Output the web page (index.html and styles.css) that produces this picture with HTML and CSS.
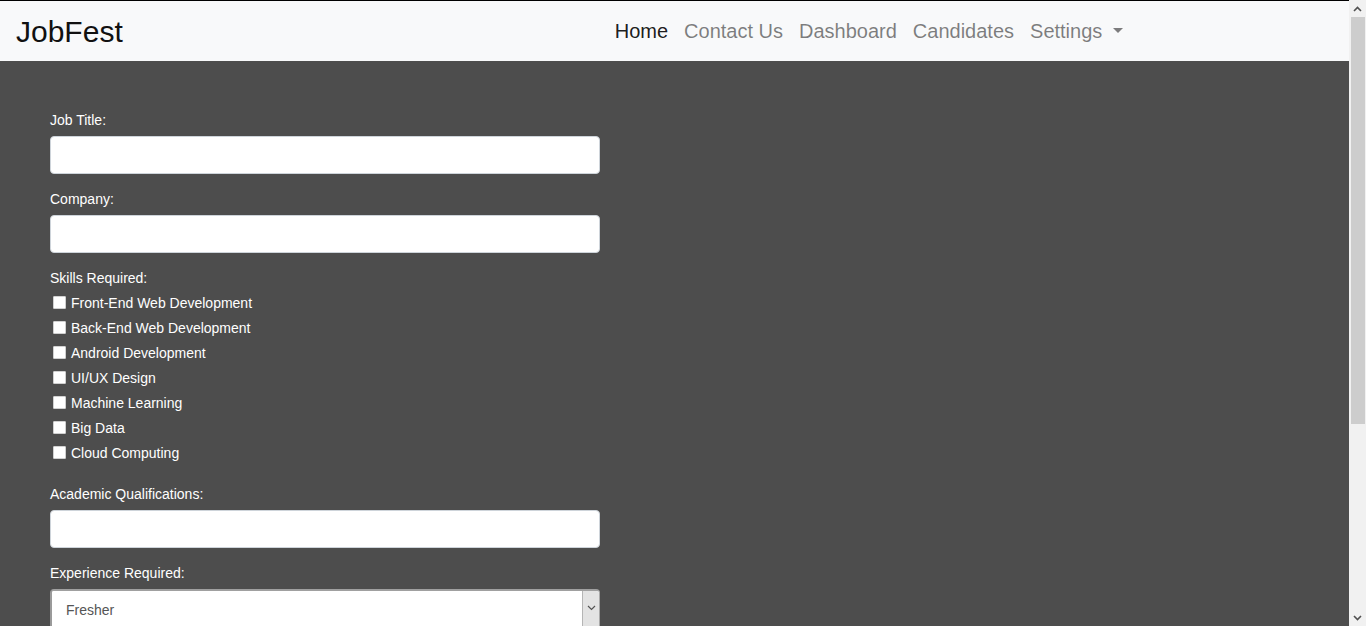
FILE: index.html
```html
<!DOCTYPE html>
<html lang="en">
<head>
<meta charset="utf-8">
<title>JobFest</title>
<link rel="stylesheet" href="styles.css">
</head>
<body>
<div class="viewport">
  <header class="navbar">
    <a class="brand" href="#">JobFest</a>
    <ul class="nav">
      <li><a class="nav-link active" href="#">Home</a></li>
      <li><a class="nav-link" href="#">Contact Us</a></li>
      <li><a class="nav-link" href="#">Dashboard</a></li>
      <li><a class="nav-link" href="#">Candidates</a></li>
      <li><a class="nav-link dropdown" href="#">Settings<span class="caret"></span></a></li>
    </ul>
  </header>
  <main class="page">
    <form class="job-form">
      <div class="group">
        <label class="label" for="title">Job Title:</label>
        <input class="field" id="title" type="text">
      </div>
      <div class="group">
        <label class="label" for="company">Company:</label>
        <input class="field" id="company" type="text">
      </div>
      <div class="group skills">
        <div class="label label-tight">Skills Required:</div>
        <label class="check"><input type="checkbox" class="box"><span>Front-End Web Development</span></label>
        <label class="check"><input type="checkbox" class="box"><span>Back-End Web Development</span></label>
        <label class="check"><input type="checkbox" class="box"><span>Android Development</span></label>
        <label class="check"><input type="checkbox" class="box"><span>UI/UX Design</span></label>
        <label class="check"><input type="checkbox" class="box"><span>Machine Learning</span></label>
        <label class="check"><input type="checkbox" class="box"><span>Big Data</span></label>
        <label class="check"><input type="checkbox" class="box"><span>Cloud Computing</span></label>
      </div>
      <div class="group">
        <label class="label" for="academic">Academic Qualifications:</label>
        <input class="field" id="academic" type="text">
      </div>
      <div class="group">
        <label class="label" for="exp">Experience Required:</label>
        <div class="select-wrap">
          <select class="select" id="exp">
            <option>Fresher</option>
            <option>1-2 Years</option>
            <option>3-5 Years</option>
            <option>5+ Years</option>
          </select>
          <span class="select-btn"><svg width="9" height="6" viewBox="0 0 9 6"><path d="M1 1 L4.5 4.5 L8 1" fill="none" stroke="#555" stroke-width="1.2"/></svg></span>
        </div>
      </div>
    </form>
  </main>
</div>
<div class="scrollbar" aria-hidden="true">
  <span class="sb-btn"><svg width="9" height="6" viewBox="0 0 9 6"><path d="M1 5 L4.5 1.5 L8 5" fill="none" stroke="#505050" stroke-width="1.6"/></svg></span>
  <span class="sb-thumb"></span>
  <span class="sb-track"></span>
  <span class="sb-btn"><svg width="9" height="6" viewBox="0 0 9 6"><path d="M1 1 L4.5 4.5 L8 1" fill="none" stroke="#505050" stroke-width="1.6"/></svg></span>
</div>
</body>
</html>
```

FILE: styles.css
```css
html, body {
  margin: 0;
  padding: 0;
  height: 100%;
}
body {
  display: flex;
  overflow: hidden;
  background: #4d4d4d;
  font-family: "Liberation Sans", Arial, sans-serif;
}
.viewport {
  flex: 1;
  min-width: 0;
  overflow: hidden;
}
.scrollbar {
  display: flex;
  flex-direction: column;
  width: 17px;
  flex: none;
  background: #f1f1f1;
}
.sb-btn {
  display: flex;
  align-items: center;
  justify-content: center;
  height: 17px;
  flex: none;
}
.sb-thumb {
  height: 407px;
  margin: 0 1px 0 2px;
  background: #cdcdcd;
  flex: none;
}
.sb-track {
  flex: 1;
}
.navbar {
  display: flex;
  align-items: flex-start;
  height: 60px;
  border-top: 1px solid #000;
  background: #f8f9fa;
  padding: 0 16px;
}
.brand {
  margin-top: 13px;
  font-size: 30px;
  line-height: 36px;
  color: #111;
  text-decoration: none;
}
.nav {
  display: flex;
  list-style: none;
  margin: 15px 0 0 484px;
  padding: 0;
}
.nav-link {
  display: block;
  padding: 0 8px;
  font-size: 20px;
  line-height: 30px;
  color: rgba(0, 0, 0, 0.5);
  text-decoration: none;
}
.nav-link.active {
  color: rgba(0, 0, 0, 0.9);
}
.dropdown {
  display: flex;
  align-items: flex-start;
}
.caret {
  width: 0;
  height: 0;
  margin: 12px 0 0 11px;
  border-top: 5px solid rgba(0, 0, 0, 0.5);
  border-left: 5px solid transparent;
  border-right: 5px solid transparent;
}
.page {
  padding: 47px 50px 300px;
}
.job-form {
  width: 550px;
}
.group {
  margin-bottom: 13px;
}
.label {
  display: block;
  font-size: 14px;
  line-height: 24px;
  color: #fff;
  margin-bottom: 4px;
}
.label-tight {
  margin-bottom: 0;
}
.field {
  display: block;
  box-sizing: border-box;
  width: 550px;
  height: 38px;
  margin: 0;
  border: 1px solid #ced4da;
  border-radius: 4px;
  background: #fff;
  font-size: 16px;
  padding: 6px 12px;
}
.skills {
  margin-bottom: 17px;
}
.check {
  display: flex;
  align-items: center;
  height: 25px;
  font-size: 14px;
  color: #fff;
}
.box {
  appearance: none;
  -webkit-appearance: none;
  box-sizing: border-box;
  width: 13px;
  height: 13px;
  margin: 0 5px 0 3px;
  border: 1px solid #d0d0d0;
  background: #fff;
  border-radius: 1px;
}
.select-wrap {
  display: flex;
  box-sizing: border-box;
  width: 550px;
  height: 40px;
  border: 1px solid #a8a8a8;
  border-left: 2px solid #9a9a9a;
  border-top: 2px solid #a0a0a0;
  border-radius: 4px;
  background: #fff;
  overflow: hidden;
}
.select {
  appearance: none;
  -webkit-appearance: none;
  flex: 1;
  border: 0;
  margin: 0;
  padding: 0 0 0 14px;
  background: #fff;
  font-family: "Liberation Sans", Arial, sans-serif;
  font-size: 14px;
  color: #555;
  outline: none;
}
.select-btn {
  display: flex;
  justify-content: center;
  padding-top: 14px;
  box-sizing: border-box;
  width: 17px;
  background: #e3e3e3;
  border-left: 1px solid #b5b5b5;
}
```
